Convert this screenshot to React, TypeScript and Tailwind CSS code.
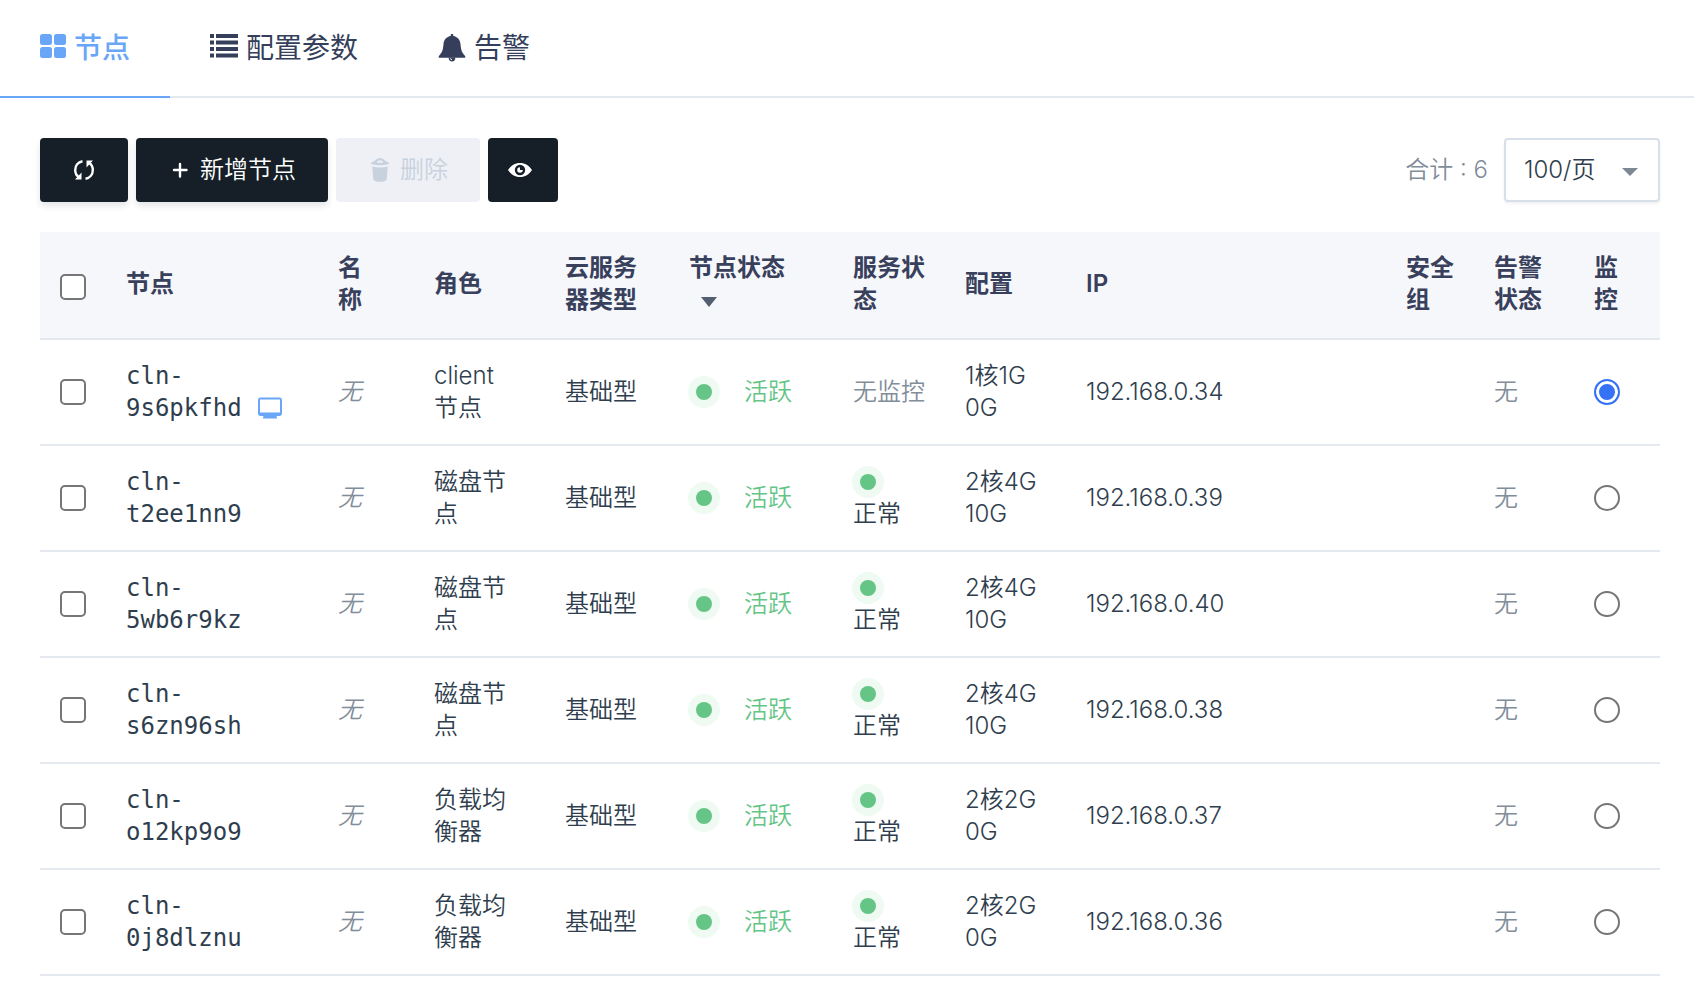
import React, { useState } from "react";

const nodes = [
  { id: "9s6pkfhd", console: true, role: "client 节点", service: "", cpu: "1核1G", disk: "0G", ip: "192.168.0.34" },
  { id: "t2ee1nn9", role: "磁盘节点", service: "正常", cpu: "2核4G", disk: "10G", ip: "192.168.0.39" },
  { id: "5wb6r9kz", role: "磁盘节点", service: "正常", cpu: "2核4G", disk: "10G", ip: "192.168.0.40" },
  { id: "s6zn96sh", role: "磁盘节点", service: "正常", cpu: "2核4G", disk: "10G", ip: "192.168.0.38" },
  { id: "o12kp9o9", role: "负载均衡器", service: "正常", cpu: "2核2G", disk: "0G", ip: "192.168.0.37" },
  { id: "0j8dlznu", role: "负载均衡器", service: "正常", cpu: "2核2G", disk: "0G", ip: "192.168.0.36" },
];

function GridIcon() {
  return (
    <svg className="mb-1 w-[26px] h-6" viewBox="0 0 26 24" fill="currentColor" aria-hidden="true">
      <rect x="0" y="0" width="12" height="11" rx="2.5" />
      <rect x="14" y="0" width="12" height="11" rx="2.5" />
      <rect x="0" y="13" width="12" height="11" rx="2.5" />
      <rect x="14" y="13" width="12" height="11" rx="2.5" />
    </svg>
  );
}

function ListIcon() {
  return (
    <svg className="mb-1 w-7 h-6" viewBox="0 0 28 24" fill="currentColor" aria-hidden="true">
      <path d="M0 0h4v4H0zM6 0h22v4H6zM0 6.500h4v4H0zM6 6.500h22v4H6zM0 13h4v4H0zM6 13h22v4H6zM0 19.500h4v4H0zM6 19.500h22v4H6z" />
    </svg>
  );
}

function BellIcon() {
  return (
    <svg className="w-7 h-7" viewBox="0 0 28 28" fill="currentColor" aria-hidden="true">
      <path d="M14 0c.8 0 1.300.5 1.300 1.300v.8c4 .7 6.800 3.600 7.200 8 .5 6 1.300 8.600 4.400 11.600.9.9.5 2.100-.8 2.100H1.900c-1.300 0-1.700-1.200-.8-2.100 3.100-3 3.900-5.600 4.400-11.600.4-4.400 3.200-7.300 7.200-8v-.8C12.700.5 13.200 0 14 0z" />
      <path fillRule="evenodd" d="M10.600 23.500h6.800c0 2.500-1.400 4-3.400 4s-3.400-1.500-3.400-4zm1.600.8c.1 1.300.8 2 1.800 2v-.8c-.6 0-.9-.5-1-1.200z" />
    </svg>
  );
}

function RefreshIcon() {
  return (
    <svg className="w-6 h-6" viewBox="0 0 24 24" aria-hidden="true">
      <g fill="none" stroke="currentColor" strokeWidth="2.400">
        <path d="M10.500 3.200C6 4 3.200 7.500 3.200 12c0 3 1.200 5.400 3.400 7" />
        <path d="M13.500 20.800c4.500-.8 7.300-4.300 7.300-8.800 0-3-1.200-5.400-3.400-7" />
      </g>
      <path fill="currentColor" d="M9.500 14.500v7H3zM14.500 9.500v-7H21z" />
    </svg>
  );
}

function PlusIcon() {
  return (
    <svg className="w-6 h-6" viewBox="0 0 24 24" aria-hidden="true">
      <path d="M12 6v12.500M6 12h12.500" stroke="currentColor" strokeWidth="2.400" strokeLinecap="round" />
    </svg>
  );
}

function TrashIcon() {
  return (
    <svg className="w-6 h-6" viewBox="0 0 24 24" fill="currentColor" aria-hidden="true">
      <path fillRule="evenodd" d="M12 0c2 0 3.500 1 4.800 2.400l3.800 2.100c.8.6.6 1.500-.6 1.800-5 1.200-11 1.200-16 0-1.200-.3-1.400-1.200-.6-1.800l3.800-2.100C8.500 1 10 0 12 0zm0 2.300c-1.300 0-2.400.8-3.200 2l1.700.9 1.500-1 1.500 1 1.700-.9c-.8-1.200-1.900-2-3.200-2z" />
      <path d="M4.200 8.500c5 1.300 10.600 1.300 15.600 0l-1.100 12.400c-.2 1.800-3 2.900-6.700 2.900s-6.500-1.100-6.700-2.900z" />
    </svg>
  );
}

function EyeIcon() {
  return (
    <svg className="w-6 h-6" viewBox="0 0 24 24" fill="currentColor" aria-hidden="true">
      <path fillRule="evenodd" d="M12 5c5 0 9 2.600 12 7-3 4.400-7 7-12 7s-9-2.600-12-7c3-4.400 7-7 12-7zm0 1.800a5.200 5.200 0 100 10.400 5.200 5.200 0 000-10.400z" />
      <path d="M12 9.200v2.800h2.800a2.800 2.800 0 11-2.800-2.800z" />
    </svg>
  );
}

function MonitorIcon() {
  return (
    <svg className="w-6 h-6" viewBox="0 0 24 24" fill="currentColor" aria-hidden="true">
      <path fillRule="evenodd" d="M2.500 1.500h19c1.500 0 2.500 1 2.500 2.500v13.500c0 1.500-1 2.500-2.500 2.500h-3l.7 2.500H4.800l.7-2.500h-3c-1.500 0-2.500-1-2.500-2.500V4c0-1.500 1-2.500 2.500-2.500zM2 3.500v13h20v-13z" />
    </svg>
  );
}

function Dot() {
  return <span className="block size-4 rounded-full bg-[#65c586] ring-8 ring-[#effaf3]" />;
}

const tabBase = "flex h-[98px] items-center gap-2 px-10 text-[28px] border-b-2";
const darkButton =
  "flex h-16 items-center justify-center gap-2 rounded bg-[#161f27] text-white shadow-[0_4px_6px_rgba(30,40,60,0.12)]";
const boxStyle = "block size-[26px] appearance-none border-2 border-[#767676] bg-white";
const line = "border-b-2 border-[#e4e9f0]";
const head = `${line} px-5 pt-5 pb-[22px] font-semibold`;
const cell = `${line} p-5`;

export default function App() {
  const [monitored, setMonitored] = useState("9s6pkfhd");
  return (
    <main className="min-h-screen bg-white font-['Inter','Noto_Sans_CJK_SC',sans-serif] text-2xl font-[350] leading-8 text-[#2f3e4e]">
      <nav className="flex h-[98px] border-b-2 border-[#e4e9f0] text-[#353f5b]">
        <button className={`${tabBase} border-[#69a6f8] font-medium text-[#69a6f8]`}>
          <GridIcon />
          节点
        </button>
        <button className={`${tabBase} border-transparent font-normal`}>
          <ListIcon />
          配置参数
        </button>
        <button className={`${tabBase} border-transparent font-normal`}>
          <BellIcon />
          告警
        </button>
      </nav>

      <section className="pl-10 pr-[34px] pt-10">
        <div className="flex items-center justify-between">
          <div className="flex gap-2">
            <button className={`${darkButton} w-[88px]`} aria-label="刷新">
              <RefreshIcon />
            </button>
            <button className={`${darkButton} px-8`}>
              <PlusIcon />
              新增节点
            </button>
            <button disabled className="flex h-16 items-center gap-2 rounded bg-[#eef0f6] px-8 text-[#c8d2de]">
              <TrashIcon />
              删除
            </button>
            <button className="flex h-16 items-center rounded bg-[#161f27] pl-5 pr-[26px] text-white" aria-label="显示列">
              <EyeIcon />
            </button>
          </div>
          <div className="flex items-center gap-4">
            <span className="text-[#828d9a]">合计 : 6</span>
            <div className="relative">
              <select
                aria-label="每页数量"
                className="block h-16 w-[156px] appearance-none rounded border-2 border-[#d7dfe8] bg-white pl-[18px] shadow-[0_2px_3px_rgba(30,40,60,0.06)]"
              >
                <option>100/页</option>
              </select>
              <svg className="pointer-events-none absolute right-[22px] top-[30px] h-2 w-4" viewBox="0 0 16 8" aria-hidden="true">
                <path d="M0 0h16L8 8z" fill="#7d8895" />
              </svg>
            </div>
          </div>
        </div>

        <table className="mt-[30px] w-full table-fixed border-separate border-spacing-0 text-left">
          <colgroup>
            <col className="w-[66px]" />
            <col className="w-[212px]" />
            <col className="w-24" />
            <col className="w-[131px]" />
            <col className="w-[124px]" />
            <col className="w-[164px]" />
            <col className="w-[112px]" />
            <col className="w-[121px]" />
            <col />
            <col className="w-[88px]" />
            <col className="w-[100px]" />
            <col className="w-[86px]" />
          </colgroup>
          <thead>
            <tr className="bg-[#f5f7fb] text-[#38405c]">
              <th className={`${line} px-5 pt-1`}>
                <input type="checkbox" aria-label="全选" className={`${boxStyle} rounded-[5px]`} />
              </th>
              <th className={head}>节点</th>
              <th className={`${line} pb-[22px] pl-5 pr-8 pt-5 font-semibold`}>名称</th>
              <th className={head}>角色</th>
              <th className={head}>云服务器类型</th>
              <th className={head}>
                节点状态
                <span className="flex h-8 items-center pl-3 pt-1">
                  <svg className="h-[10px] w-4" viewBox="0 0 16 10" aria-hidden="true">
                    <path d="M0 0h16L8 10z" fill="#525f70" />
                  </svg>
                </span>
              </th>
              <th className={head}>服务状态</th>
              <th className={head}>配置</th>
              <th className={head}>IP</th>
              <th className={head}>安全组</th>
              <th className={head}>告警状态</th>
              <th className={head}>监控</th>
            </tr>
          </thead>
          <tbody>
            {nodes.map((n) => (
              <tr key={n.id}>
                <td className={cell}>
                  <input type="checkbox" aria-label={`cln-${n.id}`} className={`${boxStyle} rounded-[5px]`} />
                </td>
                <td className={`${cell} font-['DejaVu_Sans_Mono',monospace]`}>
                  cln-
                  <span className="flex items-center gap-4">
                    {n.id}
                    {n.console && (
                      <a href="#console" aria-label="控制台" className="text-[#69a6f8]">
                        <MonitorIcon />
                      </a>
                    )}
                  </span>
                </td>
                <td className={`${cell} italic text-[#828d9a]`}>无</td>
                <td className={`${line} py-5 pl-5 pr-8`}>{n.role}</td>
                <td className={cell}>基础型</td>
                <td className={cell}>
                  <span className="flex items-center gap-8 pl-[7px] text-[#65c586]">
                    <Dot />
                    活跃
                  </span>
                </td>
                <td className={cell}>
                  {n.service ? (
                    <>
                      <span className="flex h-8 items-center pl-[7px]">
                        <Dot />
                      </span>
                      {n.service}
                    </>
                  ) : (
                    <span className="text-[#828d9a]">无监控</span>
                  )}
                </td>
                <td className={cell}>
                  {n.cpu}
                  <br />
                  {n.disk}
                </td>
                <td className={cell}>{n.ip}</td>
                <td className={cell} />
                <td className={`${cell} text-[#828d9a]`}>无</td>
                <td className={cell}>
                  <input
                    type="radio"
                    name="monitor"
                    aria-label={`监控 cln-${n.id}`}
                    checked={monitored === n.id}
                    onChange={() => setMonitored(n.id)}
                    className={`${boxStyle} rounded-full checked:border-[#3572f6] checked:bg-[#3572f6] checked:shadow-[inset_0_0_0_3px_white]`}
                  />
                </td>
              </tr>
            ))}
          </tbody>
        </table>
      </section>
    </main>
  );
}
